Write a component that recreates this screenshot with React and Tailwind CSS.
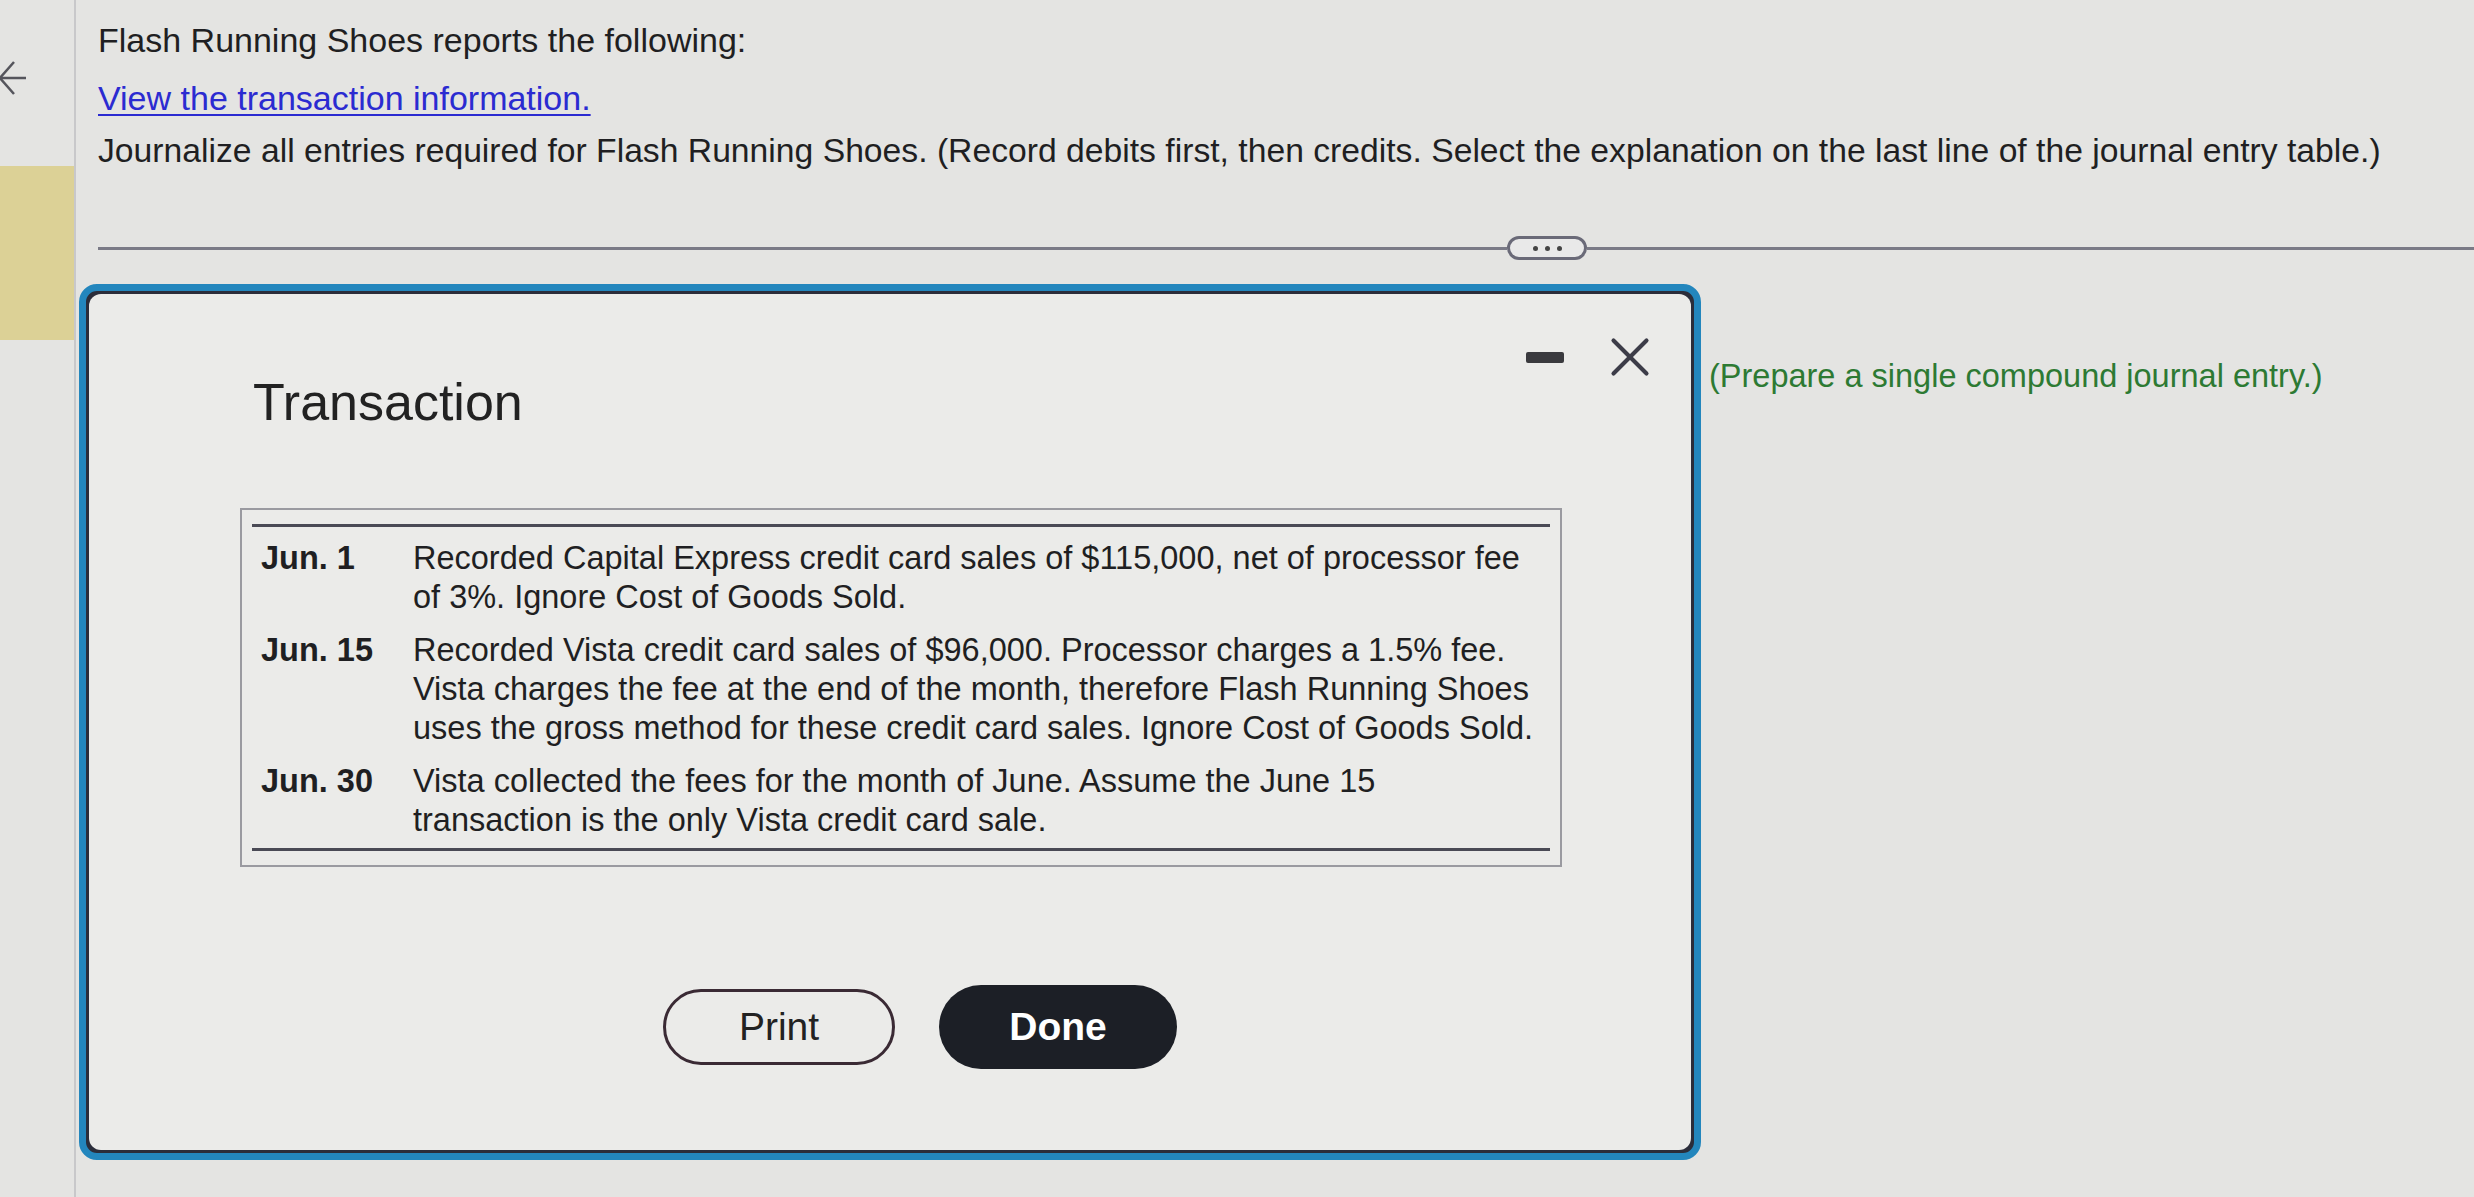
import { X } from 'lucide-react'

const rows = [
  {
    date: 'Jun. 1',
    lines: [
      'Recorded Capital Express credit card sales of $115,000, net of processor fee',
      'of 3%. Ignore Cost of Goods Sold.',
    ],
  },
  {
    date: 'Jun. 15',
    lines: [
      'Recorded Vista credit card sales of $96,000. Processor charges a 1.5% fee.',
      'Vista charges the fee at the end of the month, therefore Flash Running Shoes',
      'uses the gross method for these credit card sales. Ignore Cost of Goods Sold.',
    ],
  },
  {
    date: 'Jun. 30',
    lines: [
      'Vista collected the fees for the month of June. Assume the June 15',
      'transaction is the only Vista credit card sale.',
    ],
  },
]

export default function App() {
  return (
    <div className="flex h-[1197px] w-full overflow-hidden bg-[#e4e4e2] font-['Liberation_Sans',Arial,sans-serif] text-[#1f1f22]">

      {/* Left rail */}
      <aside className="w-[76px] shrink-0 border-r-2 border-[#c8c8ca]">
        <svg viewBox="0 0 26 36" className="mt-[60px] h-[36px] w-[26px]" fill="none" stroke="#55555c" strokeWidth="2.5">
          <path d="M14 2 L0 18 L14 34" />
          <path d="M0 18 L26 18" />
        </svg>
        <div className="mt-[70px] h-[174px] bg-[#dcd196]" />
      </aside>

      <main className="flex-1 pl-[22px]">
        {/* Prompt */}
        <p className="mt-[20px] text-[34px] leading-[40px]">Flash Running Shoes reports the following:</p>
        <a className="mt-[18px] block w-fit text-[34px] leading-[40px] text-[#2b2bd1] underline decoration-2 underline-offset-4">
          View the transaction information.
        </a>
        <p className="mt-[12px] text-[33.7px] leading-[40px]">
          Journalize all entries required for Flash Running Shoes. (Record debits first, then credits. Select the explanation on the last line of the journal entry table.)
        </p>

        {/* Divider with more button */}
        <div className="mt-[66px] flex items-center">
          <div className="h-[3px] w-[1409px] bg-[#7a7a86]" />
          <div className="flex h-[24px] w-[80px] items-center justify-center gap-[7px] rounded-full border-[3px] border-[#6a6a78] bg-[#e9e9e9]">
            <span className="h-[5px] w-[5px] rounded-full bg-[#444]" />
            <span className="h-[5px] w-[5px] rounded-full bg-[#444]" />
            <span className="h-[5px] w-[5px] rounded-full bg-[#444]" />
          </div>
          <div className="h-[3px] flex-1 bg-[#7a7a86]" />
        </div>

        <div className="mt-[24px] flex items-start">
          {/* Transaction dialog */}
          <div className="-ml-[19px] h-[876px] w-[1622px] shrink-0 rounded-[18px] border-[7px] border-[#2386bd] bg-[#2b2d3a] p-[3px]">
            <div className="flex h-full flex-col rounded-[12px] bg-[#ebebe9]">
              <div className="flex items-start justify-between pl-[164px] pr-[28px]">
                <h2 className="mt-[78px] text-[52px] leading-[60px] text-[#222]">Transaction</h2>
                <div className="mt-[30px] flex items-center gap-[33px]">
                  <span className="h-[11px] w-[38px] rounded-[2px] bg-[#3a3a3e]" />
                  <X className="h-[66px] w-[66px] text-[#3c3c48]" strokeWidth={1.5} />
                </div>
              </div>

              {/* Table */}
              <div className="mt-[76px] ml-[151px] w-[1322px] border-2 border-[#9a9aa0] px-[10px] py-[14px]">
                <div className="border-t-[3px] border-[#4a4a55] pt-[12px] pb-[8px]">
                  {rows.map((row) => (
                    <div key={row.date} className="flex text-[32.5px] leading-[39px] [&:not(:last-child)]:mb-[14px]">
                      <div className="w-[161px] shrink-0 pl-[9px] font-bold">{row.date}</div>
                      <div>
                        {row.lines.map((line) => (
                          <div key={line}>{line}</div>
                        ))}
                      </div>
                    </div>
                  ))}
                </div>
                <div className="border-t-[3px] border-[#4a4a55]" />
              </div>

              {/* Buttons */}
              <div className="mt-[118px] flex items-center justify-center gap-[44px] pl-[60px]">
                <button className="h-[76px] w-[232px] rounded-full border-[3px] border-[#3a2a34] text-[39px] text-[#222]">
                  Print
                </button>
                <button className="h-[84px] w-[238px] rounded-full bg-[#1c1f26] text-[39px] font-bold text-white">
                  Done
                </button>
              </div>
            </div>
          </div>

          {/* Side note */}
          <p className="ml-[8px] mt-[72px] text-[32.5px] leading-[40px] text-[#2d7a33]">
            (Prepare a single compound journal entry.)
          </p>
        </div>
      </main>
    </div>
  )
}
